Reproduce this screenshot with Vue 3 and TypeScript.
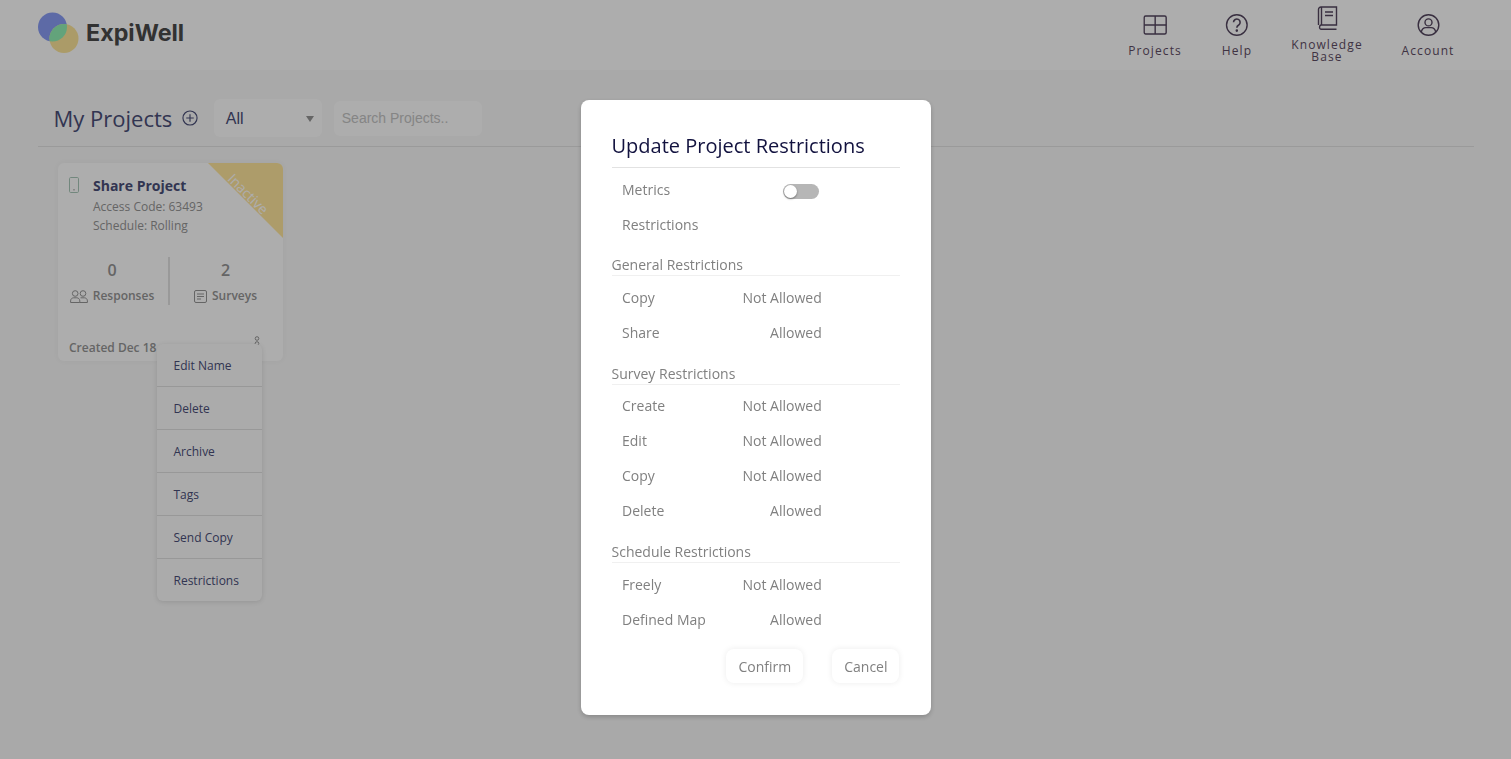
<script setup lang="ts">
interface Row { label: string; value: string }
interface Group { title: string; rows: Row[] }
const nav = ['Projects', 'Help', 'Knowledge Base', 'Account']
const menu = ['Edit Name', 'Delete', 'Archive', 'Tags', 'Send Copy', 'Restrictions']
const groups: Group[] = [
  { title: 'General Restrictions', rows: [
    { label: 'Copy', value: 'Not Allowed' },
    { label: 'Share', value: 'Allowed' } ] },
  { title: 'Survey Restrictions', rows: [
    { label: 'Create', value: 'Not Allowed' },
    { label: 'Edit', value: 'Not Allowed' },
    { label: 'Copy', value: 'Not Allowed' },
    { label: 'Delete', value: 'Allowed' } ] },
  { title: 'Schedule Restrictions', rows: [
    { label: 'Freely', value: 'Not Allowed' },
    { label: 'Defined Map', value: 'Allowed' } ] },
]
</script>

<template>
  <div class="page">
    <header class="topbar">
      <div class="brand">
        <svg class="logo" width="42" height="42" viewBox="0 0 42 42">
          <defs><clipPath id="blueClip"><circle cx="14.5" cy="15" r="14.5" /></clipPath></defs>
          <circle cx="14.5" cy="15" r="14.5" fill="#8a9df5" />
          <circle cx="26" cy="26.5" r="14.5" fill="#fde59a" />
          <circle cx="26" cy="26.5" r="14.5" fill="#93f0b6" clip-path="url(#blueClip)" />
        </svg>
        <span class="brand-name">ExpiWell</span>
      </div>
      <nav class="nav">
        <a class="nav-item n-projects">
          <svg width="24" height="24" viewBox="0 0 24 24" fill="none" stroke="#54465f" stroke-width="1.4"><rect x="1" y="3" width="22" height="18" rx="1.5" /><path d="M12 3v18M1 12h22" /></svg>
          <span>{{ nav[0] }}</span>
        </a>
        <a class="nav-item n-help">
          <svg width="24" height="24" viewBox="0 0 24 24" fill="none" stroke="#54465f" stroke-width="1.4"><circle cx="12" cy="12" r="10.3" /><path d="M8.7 9.3a3.3 3.3 0 1 1 5.2 2.7c-1.2.8-1.9 1.4-1.9 2.8" stroke-width="1.6" /><circle cx="12" cy="17.6" r=".6" fill="#54465f" /></svg>
          <span>{{ nav[1] }}</span>
        </a>
        <a class="nav-item n-kb">
          <svg width="24" height="24" viewBox="0 0 24 24" fill="none" stroke="#54465f" stroke-width="1.4"><path d="M3.5 19V3.500A2.500 2.500 0 0 1 6 1h15.500v18H6a2.300 2.300 0 0 0 0 4.300h15.500" /><path d="M6.500 1v18M10 6h8M10 9.500h8" /></svg>
          <span>{{ nav[2] }}</span>
        </a>
        <a class="nav-item n-account">
          <svg width="24" height="24" viewBox="0 0 24 24" fill="none" stroke="#54465f" stroke-width="1.4"><circle cx="12" cy="12" r="10.3" /><circle cx="12" cy="9.4" r="3.5" /><path d="M4.8 19c.6-3 3-4.4 4.6-4.4h5.200c1.600 0 4 1.400 4.600 4.400" /></svg>
          <span>{{ nav[3] }}</span>
        </a>
      </nav>
    </header>

    <main class="content">
      <div class="title-row">
        <h1 class="page-title">My Projects</h1>
        <svg class="add" width="16" height="16" viewBox="0 0 17 17" fill="none" stroke="#4a4e78" stroke-width="1.2"><circle cx="8.500" cy="8.500" r="7.500" /><path d="M8.500 4.500v8M4.500 8.500h8" /></svg>
        <div class="select"><span>All</span><i class="caret"></i></div>
        <input class="search" placeholder="Search Projects.." />
      </div>

      <section class="card">
        <div class="ribbon"><span>Inactive</span></div>
        <div class="card-head">
          <svg class="phone" width="10" height="16" viewBox="0 0 10 16" fill="none" stroke="#a8c8b9" stroke-width="1"><rect x=".5" y=".5" width="9" height="15" rx="1.200" /><path d="M4.500 12.800h1" stroke="#8f8f8f" stroke-width="1.400" /></svg>
          <div class="card-info">
            <div class="card-name">Share Project</div>
            <div class="card-meta">Access Code: 63493</div>
            <div class="card-meta">Schedule: Rolling</div>
          </div>
        </div>
        <div class="stats">
          <div class="stat left">
            <div class="stat-num">0</div>
            <div class="stat-label">
              <svg width="18" height="13" viewBox="0 0 18 13" fill="none" stroke="#959595" stroke-width="1"><circle cx="5.200" cy="3.500" r="2.800" /><circle cx="13" cy="3.500" r="2.800" /><path d="M.6 12.500v-1.600c0-2 1.600-3.100 3-3.100h3.200c1.400 0 3 1.100 3 3.100v1.600zM10.500 7.800h3.900c1.400 0 3 1.100 3 3.100v1.600H9.800" /></svg>
              <span>Responses</span>
            </div>
          </div>
          <div class="stat-sep"></div>
          <div class="stat right">
            <div class="stat-num">2</div>
            <div class="stat-label">
              <svg width="13" height="13" viewBox="0 0 13 13" fill="none" stroke="#959595" stroke-width="1"><rect x=".5" y=".5" width="12" height="12" rx="1.500" /><path d="M3 4h7M3 6.500h7M3 9h4" /></svg>
              <span>Surveys</span>
            </div>
          </div>
        </div>
        <div class="card-foot">
          <span>Created Dec 18</span>
          <svg class="kebab" width="6" height="14" viewBox="0 0 6 14" fill="none" stroke="#959595" stroke-width="1"><circle cx="3" cy="2.500" r="1.800" /><circle cx="3" cy="7.500" r="1.800" /></svg>
        </div>
        <ul class="menu">
          <li v-for="m in menu" :key="m">{{ m }}</li>
        </ul>
      </section>
    </main>

    <div class="overlay">
      <div class="modal">
        <h2 class="modal-title">Update Project Restrictions</h2>
        <div class="row first">
          <span>Metrics</span>
          <span class="toggle"><i></i></span>
        </div>
        <div class="row">
          <span>Restrictions</span>
        </div>
        <div v-for="g in groups" :key="g.title" class="group">
          <div class="group-title">{{ g.title }}</div>
          <div v-for="r in g.rows" :key="r.label" class="row">
            <span>{{ r.label }}</span>
            <span>{{ r.value }}</span>
          </div>
        </div>
        <div class="actions">
          <button class="btn">Confirm</button>
          <button class="btn">Cancel</button>
        </div>
      </div>
    </div>
  </div>
</template>

<style>
html, body { margin: 0; padding: 0; }
</style>

<style scoped>
.page {
  min-height: 759px;
  height: 759px;
  overflow: hidden;
  background: #f9f9f9;
  font-family: "Open Sans", "Liberation Sans", sans-serif;
  position: relative;
  box-sizing: border-box;
}
.topbar {
  height: 70px;
  box-sizing: border-box;
  background: #ffffff;
  display: flex;
  align-items: stretch;
  justify-content: space-between;
  padding: 0 0 0 38px;
}
.brand { display: flex; align-items: center; gap: 6px; padding-bottom: 6px; }
.logo { margin-top: 1px; }
.brand-name {
  font-family: Inter, "Liberation Sans", sans-serif;
  font-weight: 700;
  font-size: 23.3px;
  line-height: 28px;
  color: #4a4a4a;
  margin-top: 1px;
}
.nav { display: flex; align-items: flex-start; position: relative; width: 370px; }
.nav-item {
  position: absolute;
  display: flex;
  flex-direction: column;
  align-items: center;
  top: 13px;
  transform: translateX(-50%);
  font-size: 12px;
  line-height: 12px;
  letter-spacing: 1.1px;
  color: #5e4c64;
  text-align: center;
}
.nav-item svg { margin-bottom: 8px; }
.nav-item span { display: block; }
.n-projects { left: 14px; }
.n-help { left: 96px; }
.n-kb { left: 186px; top: 6px; width: 78px; }
.n-kb svg { margin-bottom: 9px; }
.n-account { left: 287px; }

.content { padding: 0 37px 0 38px; }
.title-row {
  height: 77px;
  box-sizing: border-box;
  border-bottom: 1px solid #e4e4e4;
  display: flex;
  align-items: center;
  padding: 20px 0 0 15.5px;
}
.page-title {
  margin: 0;
  font-size: 22px;
  line-height: 30px;
  font-weight: 400;
  color: #4a4e78;
}
.add { margin: 0 0 0 10px; }
.select {
  margin-left: 15.5px;
  width: 108px;
  height: 38px;
  box-sizing: border-box;
  background: #ffffff;
  border-radius: 6px;
  display: flex;
  align-items: center;
  justify-content: space-between;
  padding: 1px 8px 0 12px;
  font-family: "Liberation Sans", Arial, sans-serif;
  font-size: 16px;
  color: #4a4e78;
}
.caret {
  width: 0;
  height: 0;
  border-left: 4px solid transparent;
  border-right: 4px solid transparent;
  border-top: 6px solid #959595;
}
.search {
  margin-left: 12px;
  width: 148px;
  height: 35px;
  box-sizing: border-box;
  border: 0;
  outline: 0;
  background: #ffffff;
  border-radius: 6px;
  padding: 0 8px 2px;
  font-family: "Liberation Sans", Arial, sans-serif;
  font-size: 14px;
  margin-top: 1px;
}
.search::placeholder { color: #c4c4c4; opacity: 1; }

.card {
  position: relative;
  margin: 16px 0 0 20px;
  width: 225px;
  height: 198px;
  box-sizing: border-box;
  background: #ffffff;
  border-radius: 6px;
  box-shadow: 0 0 6px rgba(0, 0, 0, .04);
}
.ribbon {
  position: absolute;
  top: 0;
  right: 0;
  width: 75px;
  height: 75px;
  background: #ffe69c;
  clip-path: polygon(0 0, 100% 0, 100% 100%);
  border-top-right-radius: 6px;
}
.ribbon span {
  position: absolute;
  left: 7px;
  top: 23px;
  width: 66px;
  text-align: center;
  transform: rotate(45deg);
  font-size: 14px;
  line-height: 16px;
  color: #fff;
}
.card-head { display: flex; padding: 14px 0 0 11px; }
.phone { flex: none; }
.card-info { margin-left: 14px; }
.card-name {
  font-size: 14px;
  line-height: 17px;
  font-weight: 700;
  color: #4a4e78;
  margin-bottom: 3px;
}
.card-meta { font-size: 12px; line-height: 19px; color: #959595; }
.stats { display: flex; margin-top: 22px; align-items: stretch; height: 48px; }
.stat { flex: 1; text-align: center; color: #959595; box-sizing: border-box; }
.stat.left { flex: 0 0 110px; padding-right: 2px; }
.stat.right { padding-right: 2px; }
.stat-sep { width: 2px; background: #e2e2e2; }
.stat-num { font-size: 16px; line-height: 22px; font-weight: 600; margin-top: 2px; }
.stat-label {
  display: flex;
  align-items: center;
  justify-content: center;
  gap: 5px;
  font-size: 12px;
  line-height: 20px;
  font-weight: 600;
  margin-top: 5px;
}
.card-foot {
  position: absolute;
  left: 11px;
  right: 23px;
  bottom: 4px;
  display: flex;
  justify-content: space-between;
  align-items: flex-start;
  font-size: 12px;
  line-height: 18px;
  font-weight: 600;
  color: #959595;
}
.kebab { margin-top: -3px; }
.menu {
  position: absolute;
  left: 99px;
  top: 181px;
  width: 105px;
  margin: 0;
  padding: 0;
  list-style: none;
  background: #fdfdfd;
  border-radius: 6px;
  box-shadow: 0 1px 5px rgba(0, 0, 0, .12);
  color: #4a4e78;
  font-size: 12px;
}
.menu li {
  height: 43px;
  box-sizing: border-box;
  line-height: 43px;
  padding-left: 16.5px;
  border-bottom: 1px solid #e0e0e0;
}
.menu li:last-child { border-bottom: 0; height: 42px; }

.overlay {
  position: fixed;
  inset: 0;
  background: rgba(0, 0, 0, .32);
  display: flex;
  justify-content: center;
  align-items: flex-start;
  padding-top: 100px;
  box-sizing: border-box;
}
.modal {
  width: 350px;
  height: 615px;
  box-sizing: border-box;
  background: #fff;
  border-radius: 8px;
  padding: 31px 31px 0;
  box-shadow: 0 2px 5px rgba(0, 0, 0, .2);
  color: #808080;
  font-size: 14px;
}
.modal-title {
  margin: 0;
  height: 37px;
  box-sizing: border-box;
  border-bottom: 1px solid #e2e2e2;
  font-size: 20px;
  line-height: 30px;
  font-weight: 400;
  color: #12123f;
}
.row {
  height: 35px;
  display: flex;
  align-items: center;
  justify-content: space-between;
  padding: 0 77.8px 0 10.5px;
  line-height: 20px;
}
.row.first { margin-top: 4px; }
.toggle {
  position: relative;
  width: 36px;
  height: 15px;
  margin-right: 3px;
  margin-top: 3px;
  border-radius: 8px;
  background: #b6b6b6;
  display: block;
}
.toggle i {
  position: absolute;
  left: 1px;
  top: 1px;
  width: 13px;
  height: 13px;
  background: #fff;
  border-radius: 50%;
  box-shadow: 0 1px 2px rgba(0, 0, 0, .4);
}
.group { margin-top: 13.5px; }
.group:nth-child(4) { margin-top: 13px; }
.group-title {
  height: 21px;
  box-sizing: border-box;
  border-bottom: 1px solid #f0f0f0;
  line-height: 20px;
  margin-bottom: 4.5px;
}
.group:nth-child(5) .group-title { margin-bottom: 3.5px; }
.actions {
  display: flex;
  justify-content: flex-end;
  gap: 29px;
  margin-top: 11.5px;
  padding-right: 1px;
}
.btn {
  height: 34px;
  padding: 0 11px 0 12px;
  border: 0;
  background: #fff;
  border-radius: 8px;
  box-shadow: 0 0 6px rgba(0, 0, 0, .08);
  color: #808080;
  font-family: inherit;
  font-size: 14px;
}
.btn:first-child { padding-right: 12px; }
</style>
